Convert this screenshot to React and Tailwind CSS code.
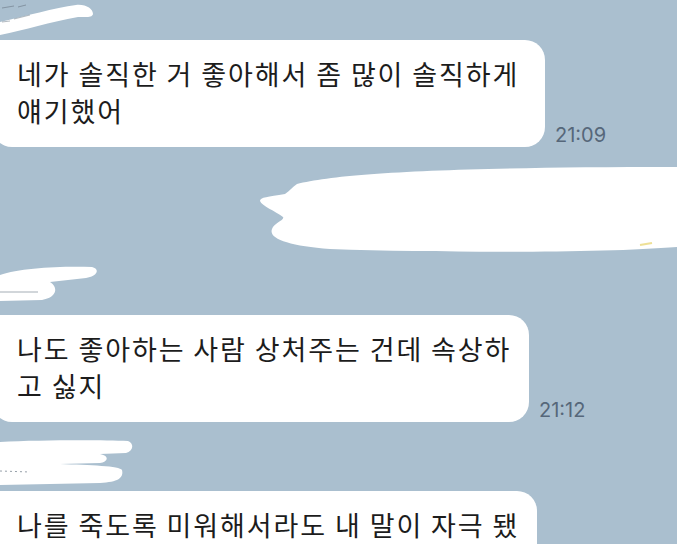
const bubbles = [
  {
    lines: ["네가 솔직한 거 좋아해서 좀 많이 솔직하게", "얘기했어"],
    time: "21:09",
    width: "w-[553px]",
  },
  {
    lines: ["나도 좋아하는 사람 상처주는 건데 속상하", "고 싫지"],
    time: "21:12",
    width: "w-[537px]",
  },
  {
    lines: ["나를 죽도록 미워해서라도 내 말이 자극 됐"],
    time: "",
    width: "w-[545px]",
  },
];

function Bubble({ lines, time, width }) {
  return (
    <div className="flex shrink-0 items-end gap-[10px] -ml-2">
      <div
        className={`${width} h-[107px] shrink-0 bg-white rounded-[20px] rounded-tl-[8px] pl-[25px] pt-[15px] text-[27px] leading-[37px] tracking-[1.9px] text-[#1c1c1c]`}
        style={{ fontFamily: '"Noto Sans CJK KR", "Noto Sans", sans-serif' }}
      >
        {lines.map((l) => (
          <div key={l} className="whitespace-nowrap">{l}</div>
        ))}
      </div>
      {time && (
        <span className="text-[20px] leading-none text-[#56677a] pb-[2px] font-['Inter',sans-serif]">
          {time}
        </span>
      )}
    </div>
  );
}

function TopScribble() {
  return (
    <svg width="677" height="40" className="block shrink-0">
      <path
        d="M0 22 C 25 16, 55 8, 76 5 C 86 4, 93 9, 93 14 C 92 18, 86 17, 78 17 C 50 22, 25 30, 0 35 Z"
        fill="#fff"
      />
      <path d="M2 8 L 14 6 M18 7 L 26 5" stroke="#6b7885" strokeWidth="1" opacity="0.6" />
      <path d="M2 22 L 10 21 M14 19 L 30 15" stroke="#6b7885" strokeWidth="1" opacity="0.5" />
    </svg>
  );
}

function MiddleScribbles() {
  return (
    <svg width="677" height="168" className="block shrink-0">
      {/* big blob over the sent message */}
      <path
        d="M297 37 C 340 26, 450 20, 677 20 L 677 100 C 600 106, 450 106, 330 102 C 290 99, 268 92, 272 82 C 274 76, 285 73, 283 70 C 275 64, 262 59, 260 54 C 260 50, 268 50, 285 47 C 290 44, 292 40, 297 37 Z"
        fill="#fff"
      />
      <path d="M640 98 L 652 96" stroke="#e8d46a" strokeWidth="2" opacity="0.7" />
      {/* name scribble */}
      <path
        d="M0 128 C 20 121, 60 119, 92 120 C 100 122, 98 129, 86 131 L 50 135 C 58 140, 58 150, 42 153 L 0 154 Z"
        fill="#fff"
      />
      <path d="M0 145 L 38 145" stroke="#6b7885" strokeWidth="1" opacity="0.6" />
    </svg>
  );
}

function LowerScribble() {
  return (
    <svg width="677" height="69" className="block shrink-0">
      <path
        d="M0 20 C 40 18, 100 18, 128 19 C 134 21, 134 29, 126 31 L 100 32 C 110 34, 108 40, 100 41 L 60 42 C 90 43, 120 44, 122 48 C 124 56, 118 60, 100 61 L 0 63 Z"
        fill="#fff"
      />
      <path d="M0 49 L 30 50" stroke="#6b7885" strokeWidth="1" strokeDasharray="2 3" opacity="0.7" />
    </svg>
  );
}

export default function App() {
  return (
    <div className="w-[677px] h-[544px] overflow-hidden bg-[#aabfcf] flex flex-col">
      <TopScribble />
      <Bubble {...bubbles[0]} />
      <MiddleScribbles />
      <Bubble {...bubbles[1]} />
      <LowerScribble />
      <Bubble {...bubbles[2]} />
    </div>
  );
}
